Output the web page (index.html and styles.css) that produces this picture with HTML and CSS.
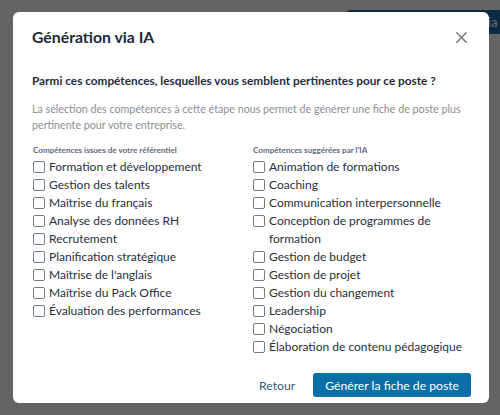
FILE: index.html
```html
<!DOCTYPE html>
<html lang="fr">
<head>
<meta charset="utf-8">
<link rel="stylesheet" href="styles.css">
</head>
<body>
<div class="page-btn">Génération via IA</div>
<div class="overlay">
  <div class="modal">
    <div class="modal-header">
      <h1 class="title">Génération via IA</h1>
      <button class="close" aria-label="Fermer">
        <svg width="11" height="11" viewBox="0 0 11 11"><path d="M0.8 0.8L10.2 10.2M10.2 0.8L0.8 10.2" stroke="#6b7684" stroke-width="1.4" fill="none" stroke-linecap="round"/></svg>
      </button>
    </div>
    <h2 class="question">Parmi ces compétences, lesquelles vous semblent pertinentes pour ce poste ?</h2>
    <p class="desc">La sélection des compétences à cette étape nous permet de générer une fiche de poste plus pertinente pour votre entreprise.</p>
    <div class="cols">
      <div class="col">
        <div class="col-title">Compétences issues de votre référentiel</div>
        <label class="item"><span class="box"></span><span>Formation et développement</span></label>
        <label class="item"><span class="box"></span><span>Gestion des talents</span></label>
        <label class="item"><span class="box"></span><span>Maîtrise du français</span></label>
        <label class="item"><span class="box"></span><span>Analyse des données RH</span></label>
        <label class="item"><span class="box"></span><span>Recrutement</span></label>
        <label class="item"><span class="box"></span><span>Planification stratégique</span></label>
        <label class="item"><span class="box"></span><span>Maîtrise de l'anglais</span></label>
        <label class="item"><span class="box"></span><span>Maîtrise du Pack Office</span></label>
        <label class="item"><span class="box"></span><span>Évaluation des performances</span></label>
      </div>
      <div class="col">
        <div class="col-title">Compétences suggérées par l'IA</div>
        <label class="item"><span class="box"></span><span>Animation de formations</span></label>
        <label class="item"><span class="box"></span><span>Coaching</span></label>
        <label class="item"><span class="box"></span><span>Communication interpersonnelle</span></label>
        <label class="item"><span class="box"></span><span>Conception de programmes de formation</span></label>
        <label class="item"><span class="box"></span><span>Gestion de budget</span></label>
        <label class="item"><span class="box"></span><span>Gestion de projet</span></label>
        <label class="item"><span class="box"></span><span>Gestion du changement</span></label>
        <label class="item"><span class="box"></span><span>Leadership</span></label>
        <label class="item"><span class="box"></span><span>Négociation</span></label>
        <label class="item"><span class="box"></span><span>Élaboration de contenu pédagogique</span></label>
      </div>
    </div>
    <div class="footer">
      <button class="btn-link">Retour</button>
      <button class="btn-primary">Générer la fiche de poste</button>
    </div>
  </div>
</div>
</body>
</html>
```
FILE: styles.css
```css
* { box-sizing: border-box; }
html, body {
  margin: 0;
  padding: 0;
  width: 500px;
  height: 415px;
  overflow: hidden;
  background: #fafafa;
  font-family: Lato, "Noto Sans", sans-serif;
}
.page-btn {
  position: absolute;
  top: 10px;
  left: 347px;
  width: 200px;
  height: 24px;
  background: #1f6ea8;
  color: #fff;
  font-size: 13px;
  line-height: 24px;
  padding-left: 67px;
  border-radius: 3px;
  white-space: nowrap;
}
.overlay {
  position: absolute;
  inset: 0;
  background: rgba(0, 0, 0, 0.6);
  padding: 12px 11px 12px 13px;
}
.modal {
  background: #fff;
  border-radius: 6px;
  height: 391px;
  padding: 13px 19px 0 19px;
  display: flex;
  flex-direction: column;
}
.modal-header {
  display: flex;
  align-items: center;
  justify-content: space-between;
  height: 24px;
}
.title {
  margin: 0;
  font-size: 15.8px;
  font-weight: 700;
  color: #1c2a3a;
  line-height: 24px;
}
.close {
  border: 0;
  background: none;
  padding: 0;
  margin-right: 3px;
  width: 11px;
  height: 11px;
  display: flex;
}
.question {
  margin: 23px 0 0;
  font-size: 11.8px;
  font-weight: 700;
  color: #1f2d3d;
  line-height: 18px;
}
.desc {
  margin: 11px 0 0;
  font-size: 10.7px;
  color: #8a8f96;
  line-height: 16px;
}
.cols {
  display: grid;
  grid-template-columns: 220px 1fr;
  margin-top: 10px;
  margin-right: -8px;
  padding-left: 1px;
}
.col-title {
  font-size: 8.1px;
  font-weight: 700;
  color: #5d6c7e;
  line-height: 14px;
  margin-bottom: 1px;
}
.item {
  display: flex;
  align-items: flex-start;
  gap: 4px;
  font-size: 12px;
  line-height: 18px;
  color: #26303c;
}
.box {
  flex: none;
  width: 12px;
  height: 12px;
  margin-top: 3px;
  border: 1px solid #6f7b88;
  border-radius: 2px;
  background: #fff;
}
.footer {
  margin-top: auto;
  margin-bottom: 6px;
  margin-right: -1px;
  display: flex;
  justify-content: flex-end;
  align-items: center;
  gap: 18px;
}
.btn-link {
  border: 0;
  background: none;
  font-family: inherit;
  font-size: 12.2px;
  color: #3a5878;
  padding: 0;
}
.btn-primary {
  border: 0;
  background: #0a6fa6;
  color: #fff;
  font-family: inherit;
  font-size: 12.2px;
  height: 24px;
  padding: 0 12px;
  border-radius: 3px;
}
```
